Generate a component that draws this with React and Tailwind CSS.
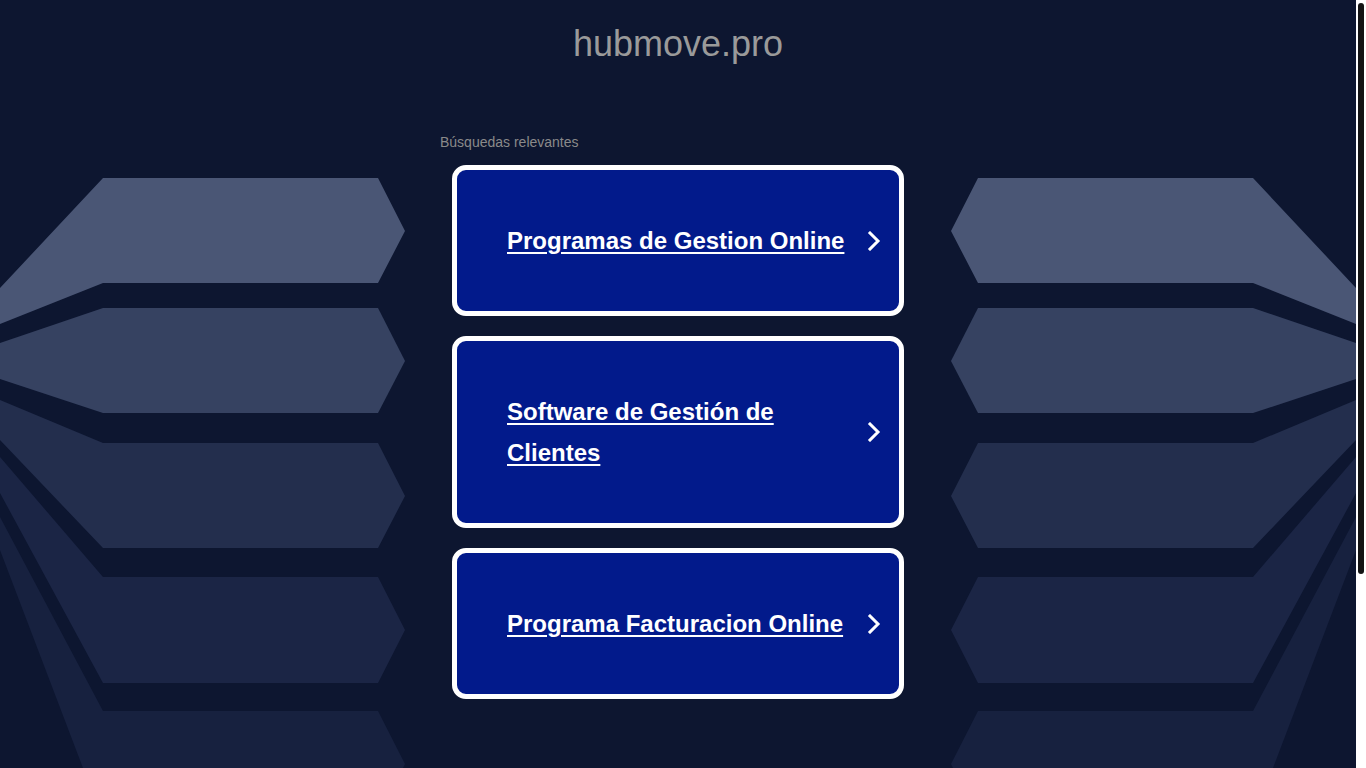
import React from "react";

const shapes = [
  { p: "0,288 103,178 378,178 405,231 378,283 103,283 0,324", c: "#4a5675" },
  { p: "0,343 103,308 378,308 405,361 378,413 103,413 0,379", c: "#364261" },
  { p: "0,400 103,443 378,443 405,496 378,548 103,548 0,440", c: "#232e4d" },
  { p: "0,457 103,577 378,577 405,630 378,683 103,683 0,493", c: "#1b2545" },
  { p: "0,517 103,711 378,711 405,764 403,768 83,768 0,550", c: "#17213f" },
];

function Background() {
  return (
    <svg
      className="absolute inset-0 w-full h-full pointer-events-none"
      viewBox="0 0 1356 768"
      preserveAspectRatio="none"
    >
      <g>
        {shapes.map((s, i) => (
          <polygon key={"l" + i} points={s.p} fill={s.c} />
        ))}
      </g>
      <g transform="translate(1356,0) scale(-1,1)">
        {shapes.map((s, i) => (
          <polygon key={"r" + i} points={s.p} fill={s.c} />
        ))}
      </g>
    </svg>
  );
}

function Chevron() {
  return (
    <svg width="14" height="20" viewBox="0 0 14 20" className="shrink-0">
      <polyline
        points="3,2 11,10 3,18"
        fill="none"
        stroke="white"
        strokeWidth="3"
        strokeLinecap="square"
        strokeLinejoin="miter"
      />
    </svg>
  );
}

function Card({ text }) {
  return (
    <a
      href="#"
      className="flex items-center ml-[12px] w-[452px] border-[5px] border-white rounded-[14px] bg-[#021a8b] pl-[50px] pr-[18px] py-[50px]"
    >
      <span className="w-[346px] text-white font-bold text-[24px] leading-[41px] underline underline-offset-[3px] decoration-2">
        {text}
      </span>
      <span className="ml-auto flex items-center">
        <Chevron />
      </span>
    </a>
  );
}

export default function App() {
  return (
    <div
      className="flex w-full h-screen overflow-hidden bg-[#0d1630]"
      style={{ fontFamily: '"Liberation Sans", Arial, sans-serif' }}
    >
      <div className="relative flex-1 h-full">
        <Background />
        <div className="relative flex flex-col items-center">
          <h1 className="pt-[23px] text-[36px] leading-[41px] text-[#9a9a9a] font-normal">
            hubmove.pro
          </h1>
          <div className="w-[476px] mt-[70px] flex flex-col">
            <div className="text-[14px] leading-[16px] text-[#8a8a8a]">
              Búsquedas relevantes
            </div>
            <div className="mt-[15px] flex flex-col gap-[20px]">
              <Card text="Programas de Gestion Online" />
              <Card text="Software de Gestión de Clientes" />
              <Card text="Programa Facturacion Online" />
            </div>
          </div>
        </div>
      </div>
      <div className="w-[10px] h-full bg-white pt-[3px] pl-[2px]">
        <div className="w-[6px] h-[571px] rounded-[3px] bg-[#141414]" />
      </div>
    </div>
  );
}
